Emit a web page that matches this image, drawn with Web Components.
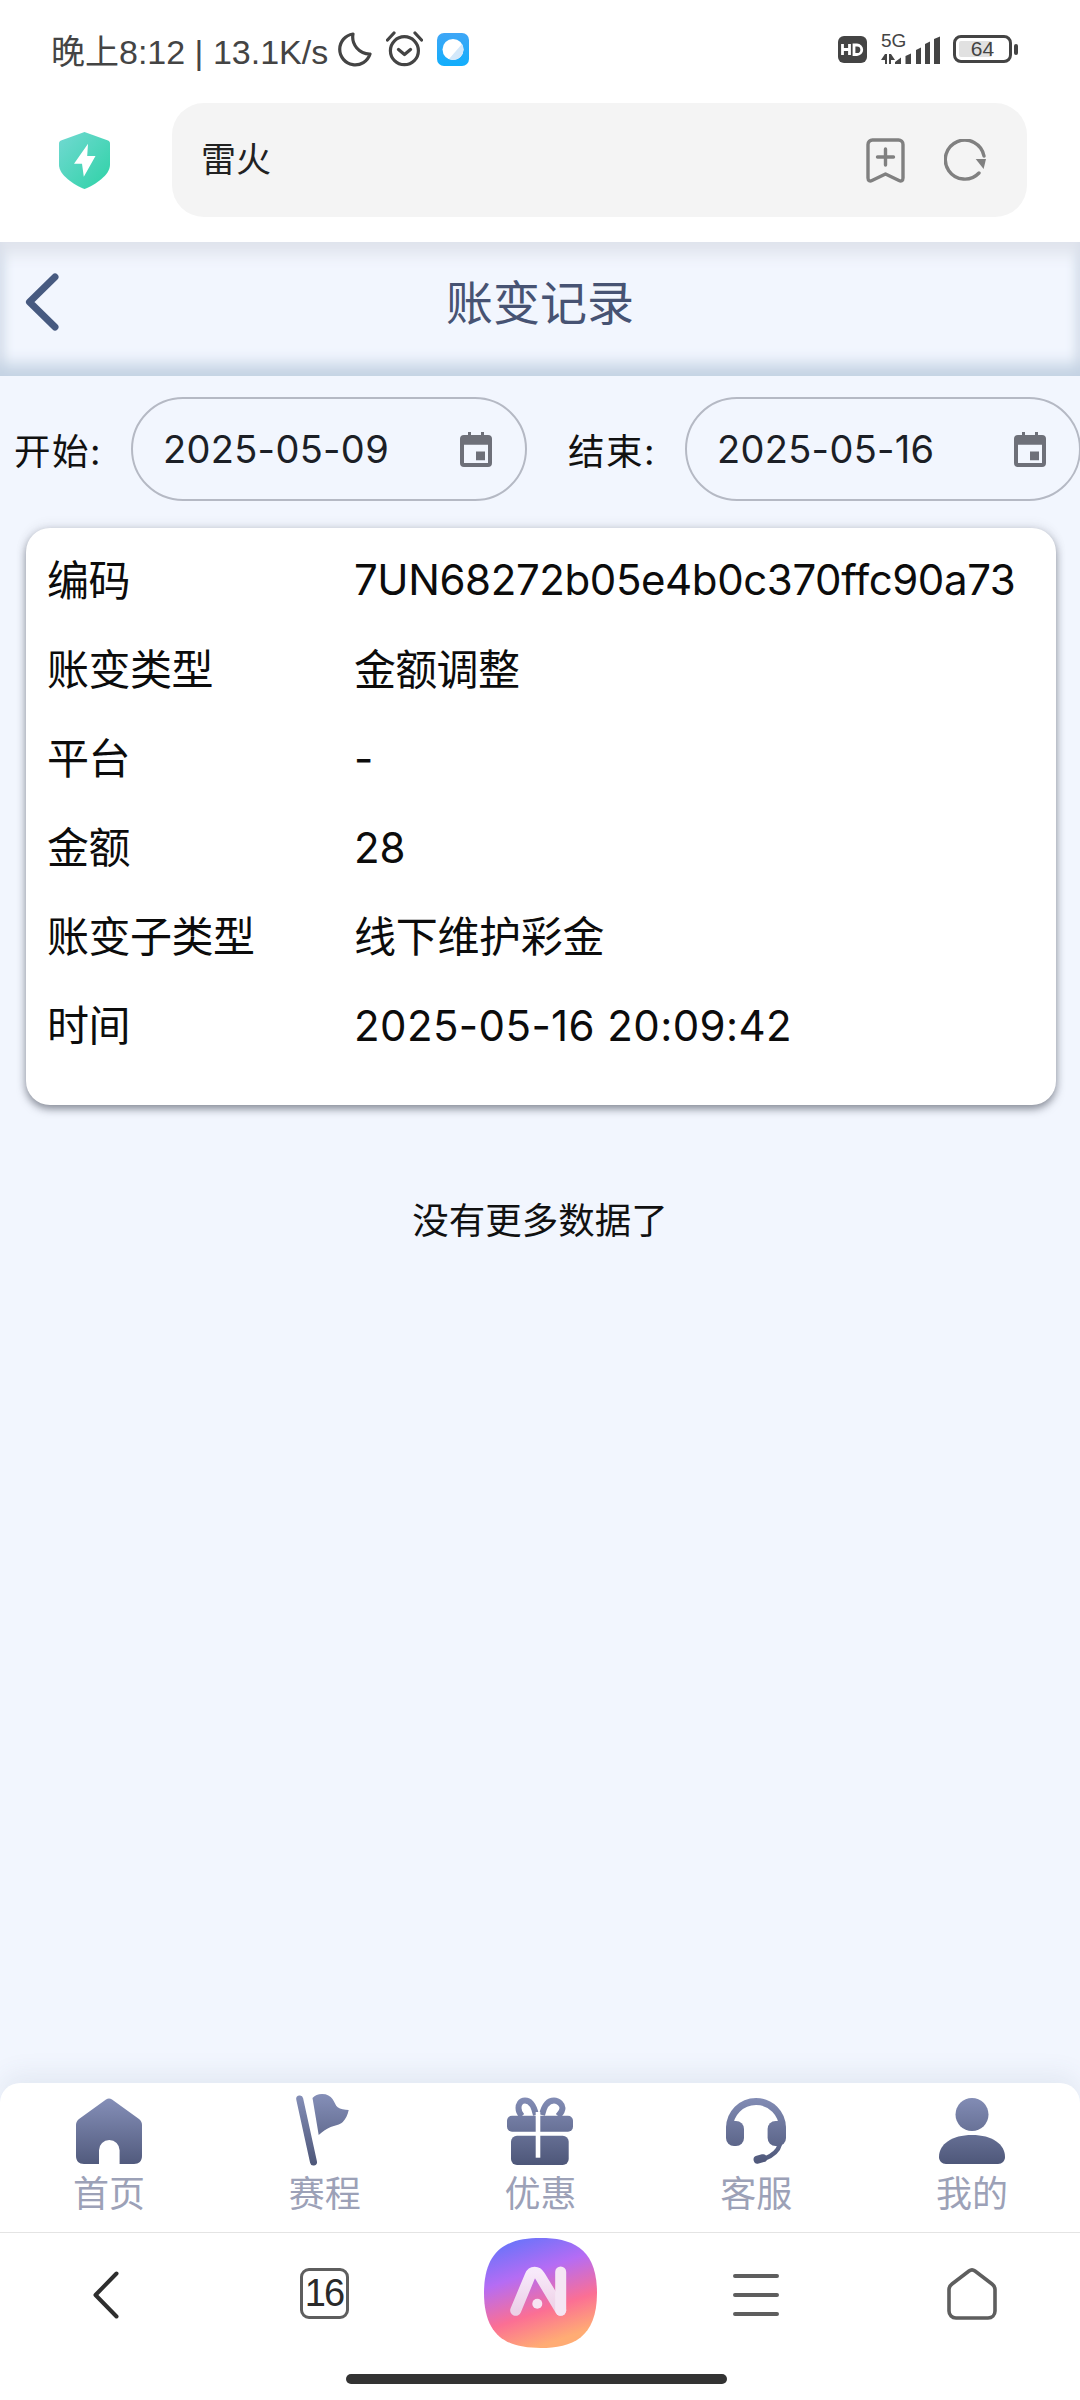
<!DOCTYPE html>
<html lang="zh">
<head>
<meta charset="utf-8">
<title>账变记录</title>
<style>
  html, body { margin: 0; padding: 0; }
  body {
    width: 1080px;
    height: 2400px;
    overflow: hidden;
    background: #fff;
    font-family: "Liberation Sans", "Noto Sans CJK SC", sans-serif;
  }
  .screen { height: 2400px; display: flex; flex-direction: column; }
  .web { flex: 1; display: flex; flex-direction: column; min-height: 0; background: #f2f6fe; }
  .fill { flex: 1; }
</style>
</head>
<body>

<div class="screen">
  <status-bar></status-bar>
  <url-bar>雷火</url-bar>
  <div class="web">
    <page-header>账变记录</page-header>
    <date-filter>
      <date-pill label="开始:" value="2025-05-09"></date-pill>
      <date-pill label="结束:" value="2025-05-16"></date-pill>
    </date-filter>
    <record-card>
      <record-row name="编码" style="--track: -.4px; --lift: 2px">7UN68272b05e4b0c370ffc90a73</record-row>
      <record-row name="账变类型" style="--track: -.7px; --lift: 6px">金额调整</record-row>
      <record-row name="平台">-</record-row>
      <record-row name="金额">28</record-row>
      <record-row name="账变子类型" style="--track: -.3px; --lift: 6px">线下维护彩金</record-row>
      <record-row name="时间" style="--track: .4px">2025-05-16 20:09:42</record-row>
    </record-card>
    <end-note>没有更多数据了</end-note>
    <div class="fill"></div>
    <tab-bar>
      <tab-item icon="home">首页</tab-item>
      <tab-item icon="flag">赛程</tab-item>
      <tab-item icon="gift">优惠</tab-item>
      <tab-item icon="headset">客服</tab-item>
      <tab-item icon="user">我的</tab-item>
    </tab-bar>
  </div>
  <browser-bar></browser-bar>
</div>

<script>
  const SANS = `"Liberation Sans", "Noto Sans CJK SC", sans-serif`;
  const UI = `Inter, "Noto Sans CJK SC", sans-serif`;

  class StatusBar extends HTMLElement {
    constructor() {
      super();
      const shadow = this.attachShadow({ mode: 'open' });
      shadow.innerHTML = `
        <style>
          :host { display: flex; height: 103px; box-sizing: border-box; padding: 29px 62px 0 51px;
                  justify-content: space-between; align-items: flex-start; background: #fff;
                  color: #444; font-family: ${SANS}; }
          .left, .right { display: flex; align-items: center; height: 40px; }
          .clock { font-size: 34px; white-space: nowrap; width: 283px; }
          .moon { margin-left: 4px; }
          .alarm { margin-left: 14px; }
          .app { margin-left: 14px; }
          .hd { margin-right: 11px; }
          .net { position: relative; width: 62px; height: 30px; margin-right: 13px; }
          .net span { position: absolute; left: 3px; top: -2px; font-size: 19px; line-height: 17px; }
          .net svg { display: block; }
          .batt { position: relative; width: 59px; height: 28px; box-sizing: border-box; border: 3px solid #444; border-radius: 8px; }
          .batt i { position: absolute; left: 3px; top: 3px; bottom: 3px; width: 33px; background: #e1e1e1; border-radius: 2px; }
          .batt span { position: absolute; inset: 0; text-align: center; font-size: 21px; line-height: 22px; }
          .nub { width: 4px; height: 11px; margin-left: 2px; background: #444; border-radius: 2px; }
        </style>
        <div class="left">
          <span class="clock">晚上8:12 | 13.1K/s</span>
          <svg class="moon" width="34" height="35" viewBox="0 0 34 35"><path d="M15 2A15.500 15.500 0 1 0 32 22 17 17 0 0 1 15 2Z" fill="none" stroke="#444" stroke-width="3.200" stroke-linejoin="round"/></svg>
          <svg class="alarm" width="37" height="36" viewBox="0 0 37 36" fill="none" stroke="#444" stroke-width="3.200" stroke-linecap="round" stroke-linejoin="round"><circle cx="18.400" cy="19.700" r="14"/><path d="M12.500 18.500l6 5 6-5M1.500 9L8 2M35.500 9L29 2"/></svg>
          <svg class="app" width="32" height="33" viewBox="0 0 32 33"><defs><linearGradient id="ap" x1="0" y1="0" x2="0" y2="1"><stop offset="0" stop-color="#3fa6f6"/><stop offset="1" stop-color="#11aefc"/></linearGradient></defs><rect width="32" height="33" rx="7" fill="url(#ap)"/><circle cx="16" cy="16.500" r="10.500" fill="#fff"/><path d="M25 11a10.500 10.500 0 0 1-13 15z" fill="#d3e8fa"/></svg>
        </div>
        <div class="right">
          <svg class="hd" width="29" height="27" viewBox="0 0 29 27"><rect width="29" height="27" rx="6" fill="#444"/><path d="M4.500 8v11M11.500 8v11M4.500 13.500h7" stroke="#fff" stroke-width="2.800" fill="none"/><path d="M16 9v9.500h3a4.750 4.750 0 0 0 0-9.500z" stroke="#fff" stroke-width="2.800" fill="none"/></svg>
          <div class="net">
            <span>5G</span>
            <svg width="62" height="30" viewBox="0 0 62 30" fill="#444"><path d="M3 26l4-6h2v10H7v-4zM11 20h2l4 6h-4v4h-2zM17 30v-2l6-4.500V30zM27.500 30V22l5.500-2.500V30zM38 30V16l5-2.500V30zM47 30V10l5-2.500V30zM56 30V5l6-2.500V30z"/></svg>
          </div>
          <div class="batt"><i></i><span>64</span></div>
          <div class="nub"></div>
        </div>
      `;
    }
  }

  class UrlBar extends HTMLElement {
    constructor() {
      super();
      const shadow = this.attachShadow({ mode: 'open' });
      shadow.innerHTML = `
        <style>
          :host { display: flex; align-items: center; height: 139px; box-sizing: border-box;
                  padding: 0 53px 25px 59px; background: #fff; font-family: ${SANS}; }
          .shield { flex: none; margin-right: 62px; }
          .field { flex: 1; height: 114px; border-radius: 32px; background: #f4f4f4; display: flex;
                   align-items: center; padding: 0 40px 0 29px; gap: 39px; font-size: 35px; color: #222; }
          .text { flex: 1; padding-bottom: 8px; }
        </style>
        <svg class="shield" width="51" height="57" viewBox="0 0 51 57">
          <defs>
            <linearGradient id="sh" x1="0" y1="0" x2="1" y2="1"><stop offset="0" stop-color="#72d9d2"/><stop offset="1" stop-color="#2ed2a6"/></linearGradient>
          </defs>
          <path d="M25.500 0 49 8.500c1.300.5 2 1.500 2 3V33c0 10-15 20-25.500 24C15 53 0 43 0 33V11.500c0-1.500.7-2.500 2-3z" fill="url(#sh)"/>
          <path d="M29 11.700 15 31.700h8L24.800 44.700 36.500 24H28.200z" fill="#fff"/>
        </svg>
        <div class="field">
          <span class="text"><slot></slot></span>
          <svg width="39" height="45" viewBox="0 0 39 45" fill="none" stroke="#808080" stroke-width="3.400" stroke-linecap="round" stroke-linejoin="round"><path d="M6.500 2h26a4.500 4.500 0 0 1 4.500 4.500V40c0 3-2 3.500-4 2.500L19.500 36 6 42.500c-2 1-4 .5-4-2.500V6.500A4.500 4.500 0 0 1 6.500 2z"/><path d="M19.500 11v16M11.500 19h16"/></svg>
          <svg width="43" height="42" viewBox="0 0 43 42" fill="none"><path d="M35 34A19.500 19.500 0 1 1 40 17" stroke="#808080" stroke-width="3.400" stroke-linecap="round"/><path d="M31.700 20H42l-2.400 10z" fill="#808080"/></svg>
        </div>
      `;
    }
  }

  class PageHeader extends HTMLElement {
    constructor() {
      super();
      const shadow = this.attachShadow({ mode: 'open' });
      shadow.innerHTML = `
        <style>
          :host { display: grid; grid-template-columns: 1fr auto 1fr; height: 134px; box-sizing: border-box; padding-bottom: 14px;
                  align-items: center; background: #f2f6fe; color: #475373; font-size: 47px; font-family: ${SANS};
                  box-shadow: inset 0 -22px 16px -10px #c3d2e3, inset 0 22px 16px -10px #dfe3ec, inset 14px 0 10px -8px #dbe3ee, inset -14px 0 10px -8px #dbe3ee; }
          svg { margin-left: 24px; display: block; }
          span { padding-bottom: 6px; }
        </style>
        <svg width="36" height="60" viewBox="0 0 36 60" fill="none"><path d="M31 5 5.500 30 31 55" stroke="#475a80" stroke-width="7" stroke-linecap="round" stroke-linejoin="round"/></svg>
        <span><slot></slot></span>
      `;
    }
  }

  class DateFilter extends HTMLElement {
    constructor() {
      super();
      const shadow = this.attachShadow({ mode: 'open' });
      shadow.innerHTML = `
        <style>
          :host { display: flex; gap: 41px; padding: 21px 0 0 14px; height: 152px; box-sizing: border-box; overflow: hidden; }
        </style>
        <slot></slot>
      `;
    }
  }

  class DatePill extends HTMLElement {
    constructor() {
      super();
      const shadow = this.attachShadow({ mode: 'open' });
      shadow.innerHTML = `
        <style>
          :host { display: flex; flex: none; align-items: center; height: 104px; font-family: ${UI}; color: #111; font-size: 36.500px; }
          .label { width: 117px; flex: none; letter-spacing: 1.500px; }
          .pill { width: 396px; height: 104px; box-sizing: border-box; border: 2px solid #b5b9c4;
                  border-radius: 52px; display: flex; align-items: center; justify-content: space-between;
                  padding: 0 33px 0 30px; color: #1c1f26; font-size: 38px; letter-spacing: .3px; }
        </style>
        <span class="label"></span>
        <div class="pill">
          <span class="value"></span>
          <svg width="32" height="35" viewBox="0 0 32 36" preserveAspectRatio="none"><path d="M4 3h4V0h3v3h10V0h3v3h4a4 4 0 0 1 4 4v25a4 4 0 0 1-4 4H4a4 4 0 0 1-4-4V7a4 4 0 0 1 4-4zM4 13v19h24V13zM16 20h9v9h-9z" fill="#6e7079" fill-rule="evenodd"/></svg>
        </div>
      `;
    }
    connectedCallback() {
      this.shadowRoot.querySelector('.label').textContent = this.getAttribute('label');
      this.shadowRoot.querySelector('.value').textContent = this.getAttribute('value');
    }
  }

  class RecordCard extends HTMLElement {
    constructor() {
      super();
      const shadow = this.attachShadow({ mode: 'open' });
      shadow.innerHTML = `
        <style>
          :host { display: block; height: 577px; box-sizing: border-box; margin: 0 24px 0 26px; padding: 8px 21px 0;
                  background: #fff; border-radius: 24px; box-shadow: 0 4px 8px rgba(50,54,70,.55), 0 -3px 12px rgba(60,64,80,.08); }
        </style>
        <slot></slot>
      `;
    }
  }

  // --track and --lift tune each value's spacing and height, CJK text sits low on Inter's baseline
  class RecordRow extends HTMLElement {
    constructor() {
      super();
      const shadow = this.attachShadow({ mode: 'open' });
      shadow.innerHTML = `
        <style>
          :host { display: flex; align-items: center; height: 89px; font-family: ${UI}; font-size: 42px; color: #0c0c0c; }
          .name { width: 307px; flex: none; letter-spacing: -.5px; padding-bottom: 6px; }
          .value { white-space: nowrap; letter-spacing: var(--track, 0); padding-bottom: var(--lift, 0); }
        </style>
        <span class="name"></span>
        <span class="value"><slot></slot></span>
      `;
    }
    connectedCallback() {
      this.shadowRoot.querySelector('.name').textContent = this.getAttribute('name');
    }
  }

  class EndNote extends HTMLElement {
    constructor() {
      super();
      const shadow = this.attachShadow({ mode: 'open' });
      shadow.innerHTML = `
        <style>
          :host { display: block; margin-top: 92px; text-align: center; font-family: ${SANS}; font-size: 36.500px; line-height: 50px; color: #111; }
        </style>
        <slot></slot>
      `;
    }
  }

  // Tab glyphs share one vertical gradient, #G, defined per svg
  const TAB_ICONS = {
    home: `<path transform="translate(3 4)" d="M30 1.500c2-1.500 4-1.500 6 0L63 21c2 1.500 3 3.500 3 6V58c0 5-3 8-8 8H43.600V52.300a10.300 10.300 0 0 0-20.600 0V66H8c-5 0-8-3-8-8V27c0-2.500 1-4.500 3-6z"/>`,
    flag: `<path d="M10.700 5 24.500 68" fill="none" stroke="url(#G)" stroke-width="7" stroke-linecap="round"/><path d="M23.500 4C26 1.500 29 0 33 0c5 0 8.500 2 10.500 5 2 3 3 6.500 5.200 8.300 2.500 2 7 2.700 11 2.700-1 5-3 9-5.900 12-3 3-8 3.500-12.100 5-4 1.500-8 4.500-12 8z"/>`,
    gift: `<path d="M18 22C16 20 14.500 18 14.500 14c0-3 1.500-7.500 6.500-7.500 5 0 9 5.500 11 14.500M54 22c2-2 4.500-4 4.500-8 0-3-3.500-7.500-8.500-7.500-6 0-10 5.500-12 14.500" fill="none" stroke="url(#G)" stroke-width="6"/><rect x="3" y="21.700" width="66" height="16" rx="5"/><rect x="7" y="41.700" width="57.700" height="29.300" rx="6"/><rect x="31.700" y="18" width="4.600" height="45.700" fill="#fff"/>`,
    headset: `<path d="M9.500 38V34a26.500 26.500 0 0 1 53 0V38" fill="none" stroke="url(#G)" stroke-width="7"/><rect x="6" y="27" width="18" height="25" rx="8"/><rect x="47.600" y="27" width="18.400" height="25" rx="8"/><path d="M60 50C58 58 52 62 44 65" fill="none" stroke="url(#G)" stroke-width="4.500"/><rect x="33.500" y="61" width="13.500" height="8" rx="4" transform="rotate(-15 40 65)"/>`,
    user: `<circle cx="36" cy="20.500" r="16.500"/><path d="M36 41c20 0 33 9 33 22 0 4-3 7-7 7H10c-4 0-7-3-7-7 0-13 13-22 33-22z"/>`
  };

  class TabBar extends HTMLElement {
    constructor() {
      super();
      const shadow = this.attachShadow({ mode: 'open' });
      shadow.innerHTML = `
        <style>
          :host { display: grid; grid-template-columns: repeat(5, 1fr); height: 149px; box-sizing: border-box;
                  padding: 11px 0 0 1px; background: #fff; border-radius: 20px 20px 0 0; box-shadow: 0 -10px 24px rgba(70,90,110,.08); }
        </style>
        <slot></slot>
      `;
    }
  }

  class TabItem extends HTMLElement {
    constructor() {
      super();
      const shadow = this.attachShadow({ mode: 'open' });
      shadow.innerHTML = `
        <style>
          :host { display: flex; flex-direction: column; align-items: center; font-family: ${SANS}; font-size: 36px; color: #9ca1b7; }
          svg { display: block; }
          span { line-height: 46px; margin-top: 4px; }
        </style>
        <svg width="72" height="74" viewBox="0 0 72 74"></svg>
        <span><slot></slot></span>
      `;
    }
    connectedCallback() {
      const svg = this.shadowRoot.querySelector('svg');
      svg.innerHTML = `<defs><linearGradient id="G" gradientUnits="userSpaceOnUse" x1="0" y1="0" x2="0" y2="72"><stop offset="0" stop-color="#858fb8"/><stop offset="1" stop-color="#4d5678"/></linearGradient></defs><g fill="url(#G)">${TAB_ICONS[this.getAttribute('icon')]}</g>`;
    }
  }

  class BrowserBar extends HTMLElement {
    constructor() {
      super();
      const shadow = this.attachShadow({ mode: 'open' });
      shadow.innerHTML = `
        <style>
          :host { display: block; height: 168px; box-sizing: border-box; background: #fff; border-top: 1px solid #e4e4e4; font-family: ${SANS}; }
          .row { display: grid; grid-template-columns: repeat(5, 216px); height: 141px; align-items: start; }
          .cell { display: flex; justify-content: center; }
          .cell svg { display: block; }
          .tabs { width: 49px; height: 51px; box-sizing: border-box; border: 3px solid #5e5e5e; border-radius: 9px; display: flex; align-items: center;
                  justify-content: center; font-size: 38px; color: #2a2a2a; letter-spacing: -2px; }
          .pill { margin-left: 346px; width: 381px; height: 10px; border-radius: 5px; background: #333; }
        </style>
        <div class="row">
          <div class="cell" style="padding: 38px 4px 0 0"><svg width="26" height="48" viewBox="0 0 26 48" fill="none"><path d="M23.500 2.500 2.500 24l21 21.500" stroke="#2e2e2e" stroke-width="4" stroke-linecap="round" stroke-linejoin="round"/></svg></div>
          <div class="cell" style="padding-top: 35px"><div class="tabs">16</div></div>
          <div class="cell" style="padding-top: 5px">
            <svg width="113" height="110" viewBox="0 0 113 110">
              <defs>
                <linearGradient id="lg" x1=".1" y1="0" x2=".45" y2="1"><stop offset="0" stop-color="#5c75fb"/><stop offset=".38" stop-color="#b56cf4"/><stop offset=".72" stop-color="#fb6f94"/><stop offset="1" stop-color="#ffac74"/></linearGradient>
                <linearGradient id="lw" x1="0" y1="0" x2="0" y2="1"><stop offset="0" stop-color="#fdf4fb"/><stop offset="1" stop-color="#ecd9ee"/></linearGradient>
              </defs>
              <path d="M56.500 0C88 0 113 10 113 55 113 100 88 110 56.500 110 25 110 0 100 0 55 0 10 25 0 56.500 0Z" fill="url(#lg)"/>
              <path d="M31.700 72.300 46 38C48 33 53 33 56 38L76.700 72.300" stroke="url(#lw)" stroke-width="11" stroke-linecap="round" stroke-linejoin="round" fill="none" opacity=".92"/>
              <path d="M76.700 34V72.300" stroke="#f5e6f4" stroke-width="11" stroke-linecap="round" fill="none"/>
              <circle cx="53.300" cy="65.700" r="5" fill="#f7e4f3"/>
            </svg>
          </div>
          <div class="cell" style="padding-top: 39px"><svg width="46" height="46" viewBox="0 0 46 46" fill="none" stroke="#5e5e5e" stroke-width="4" stroke-linecap="round"><path d="M2 4h42M2 23h42M2 42h42"/></svg></div>
          <div class="cell" style="padding-top: 35px"><svg width="50" height="52" viewBox="0 0 50 52" fill="none"><path d="M22 3c2-1.500 4-1.500 6 0l17 13c2 1.500 3 3 3 5.500V43c0 4-3 7-7 7H9c-4 0-7-3-7-7V21.500c0-2.500 1-4 3-5.500z" stroke="#5e5e5e" stroke-width="3.600" stroke-linejoin="round"/></svg></div>
        </div>
        <div class="pill"></div>
      `;
    }
  }

  customElements.define('status-bar', StatusBar);
  customElements.define('url-bar', UrlBar);
  customElements.define('page-header', PageHeader);
  customElements.define('date-filter', DateFilter);
  customElements.define('date-pill', DatePill);
  customElements.define('record-card', RecordCard);
  customElements.define('record-row', RecordRow);
  customElements.define('end-note', EndNote);
  customElements.define('tab-bar', TabBar);
  customElements.define('tab-item', TabItem);
  customElements.define('browser-bar', BrowserBar);
</script>
</body>
</html>
